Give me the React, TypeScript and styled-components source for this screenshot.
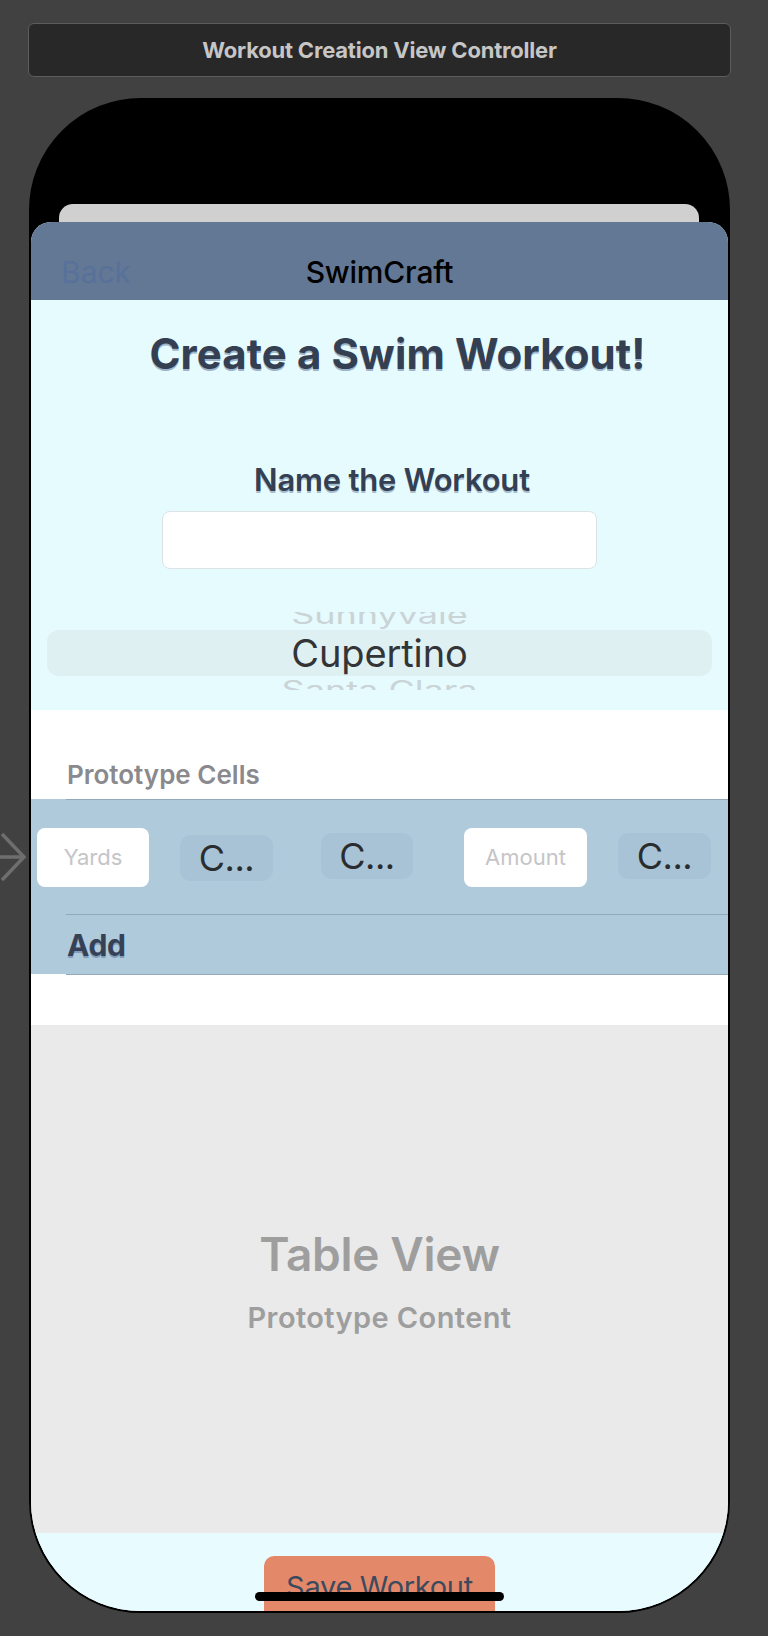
import React from "react";
import styled, { createGlobalStyle } from "styled-components";

const Global = createGlobalStyle`
  html, body { margin: 0; padding: 0; background: #414141; }
  body { font-family: Inter, "Noto Sans", Roboto, sans-serif; }
  * { box-sizing: border-box; }
`;

const Canvas = styled.div`
  position: relative;
  width: 768px;
  height: 1636px;
  overflow: hidden;
  padding-top: 23px;
  background: #414141;
`;

const TitleBar = styled.div`
  margin-left: 28px;
  width: 703px;
  height: 54px;
  display: flex;
  align-items: center;
  justify-content: center;
  background: #282828;
  border: 1.5px solid #5c5c5c;
  border-radius: 6px;
  color: #c6c6c6;
  font-weight: 700;
  font-size: 22px;
  letter-spacing: -0.2px;
`;

const EntryArrow = styled.svg`
  position: absolute;
  left: -2px;
  top: 832px;
`;

const Phone = styled.div`
  position: relative;
  margin-top: 21px;
  margin-left: 29px;
  width: 701px;
  height: 1515px;
  border: 2px solid #000;
  border-radius: 112px;
  background: #000;
  overflow: hidden;
  display: flex;
  flex-direction: column;
  padding-top: 104px;
`;

const BackCard = styled.div`
  flex-shrink: 0;
  margin: 0 29px 0 28px;
  height: 30px;
  background: #d0d0d0;
  border-radius: 14px 14px 0 0;
`;

const Sheet = styled.div`
  position: relative;
  margin-top: -12px;
  flex: 1;
  display: flex;
  flex-direction: column;
  background: #e6fbfe;
  border-radius: 20px 20px 0 0;
  overflow: hidden;
`;

const NavBar = styled.div`
  flex-shrink: 0;
  height: 78px;
  padding: 21px 30px 0;
  display: grid;
  grid-template-columns: 1fr auto 1fr;
  align-items: center;
  background: #637894;
  font-size: 30px;
  line-height: 1;
`;

const BackLabel = styled.span`
  color: #58719a;
  font-weight: 400;
`;

const NavTitle = styled.span`
  color: #000;
  font-weight: 500;
  letter-spacing: -0.2px;
`;

const Hero = styled.div`
  flex-shrink: 0;
  height: 410px;
  display: flex;
  flex-direction: column;
  align-items: center;
  background: #e6fbfe;
`;

const Heading = styled.h1`
  margin: 33px 0 0 36px;
  font-size: 42px;
  line-height: 1;
  font-weight: 700;
  letter-spacing: 0.1px;
  color: #343f52;
  text-shadow: 0 1.5px 0 rgba(85, 110, 150, 0.5);
`;

const FieldLabel = styled.div`
  margin: 89px 0 0 25px;
  font-size: 31px;
  line-height: 1;
  font-weight: 600;
  letter-spacing: -0.2px;
  color: #343f52;
  text-shadow: 0 1.5px 0 rgba(85, 110, 150, 0.45);
`;

const NameField = styled.div`
  margin-top: 16px;
  width: 435px;
  height: 58px;
  background: #fff;
  border: 1px solid #dce3e5;
  border-radius: 8px;
`;

const Picker = styled.div`
  margin-top: 43px;
  align-self: stretch;
  height: 78px;
  display: flex;
  flex-direction: column;
  overflow: hidden;
`;

const PickerGhost = styled.div<{ $pos: "top" | "bottom" }>`
  flex-shrink: 0;
  height: ${(p) => (p.$pos === "top" ? 18 : 14)}px;
  display: flex;
  justify-content: center;
  align-items: ${(p) => (p.$pos === "top" ? "flex-end" : "flex-start")};
  padding: ${(p) => (p.$pos === "top" ? "0 0 2px" : "1px 0 0")};
  span {
    display: block;
    font-size: 36px;
    line-height: 1;
    color: #cad4d7;
    transform: scaleY(0.7);
    transform-origin: ${(p) => (p.$pos === "top" ? "bottom" : "top")} center;
  }
`;

const PickerBand = styled.div`
  flex-shrink: 0;
  height: 46px;
  margin: 0 16px;
  display: flex;
  align-items: center;
  justify-content: center;
  background: #dff0f3;
  border-radius: 12px;
  font-size: 38px;
  line-height: 1;
  color: #333436;
  letter-spacing: -0.1px;
`;

const SectionHeader = styled.div`
  flex-shrink: 0;
  height: 89px;
  padding: 52px 0 0 36px;
  background: #fff;
  font-size: 26px;
  line-height: 25px;
  font-weight: 600;
  color: #8a8a8e;
  letter-spacing: 0;
`;

const Cell = styled.div<{ $h: number }>`
  flex-shrink: 0;
  position: relative;
  height: ${(p) => p.$h}px;
  display: flex;
  align-items: center;
  background-color: #aecadb;
  border-top: 1px solid transparent;
  background-image: linear-gradient(#93a9ba, #93a9ba);
  background-repeat: no-repeat;
  background-size: calc(100% - 35px) 1px;
  background-position: 35px 0;
  background-origin: border-box;
`;

const CellRow = styled.div`
  display: flex;
  align-items: center;
  padding-left: 6px;
`;

const InputBox = styled.div<{ $w: number; $ml: number }>`
  width: ${(p) => p.$w}px;
  margin-left: ${(p) => p.$ml}px;
  height: 59px;
  display: flex;
  align-items: center;
  justify-content: center;
  background: #fff;
  border-radius: 8px;
  font-size: 22px;
  color: #c5c5c8;
`;

const Chip = styled.div<{ $w: number; $ml: number; $dy: number }>`
  width: ${(p) => p.$w}px;
  margin-left: ${(p) => p.$ml}px;
  height: 46px;
  transform: translateY(${(p) => p.$dy}px);
  display: flex;
  align-items: center;
  justify-content: center;
  background: #a8c3d6;
  border-radius: 11px;
  font-size: 36px;
  line-height: 1;
  color: #2b2c2e;
  letter-spacing: -0.5px;
`;

const AddLabel = styled.span`
  padding-left: 36px;
  font-size: 30px;
  line-height: 1;
  font-weight: 700;
  color: #364156;
  letter-spacing: -0.3px;
  text-shadow: 0 1.5px 0 rgba(85, 110, 150, 0.5);
`;

const BottomRule = styled.div`
  flex-shrink: 0;
  height: 51px;
  background-color: #fff;
  background-image: linear-gradient(#93a9ba, #93a9ba);
  background-repeat: no-repeat;
  background-size: calc(100% - 35px) 1px;
  background-position: 35px 0;
`;

const TableArea = styled.div`
  flex-shrink: 0;
  height: 508px;
  padding-top: 206px;
  display: flex;
  flex-direction: column;
  align-items: center;
  background: #eaeaea;
  color: #9e9e9e;
  font-weight: 600;
  line-height: 1;
`;

const TableTitle = styled.div`
  font-size: 46px;
  letter-spacing: -0.3px;
`;

const TableSub = styled.div`
  margin-top: 26px;
  font-size: 29px;
  letter-spacing: 0.4px;
`;

const Footer = styled.div`
  flex: 1;
  display: flex;
  justify-content: center;
  padding-top: 23px;
  background: #e8fbfe;
`;

const SaveButton = styled.div`
  width: 231px;
  height: 80px;
  padding-top: 16px;
  display: flex;
  justify-content: center;
  background: #e4886a;
  border-radius: 10px;
  font-size: 29px;
  line-height: 1;
  color: #3c4a5e;
  letter-spacing: -0.3px;
`;

const HomeIndicator = styled.div`
  position: absolute;
  left: 224px;
  bottom: 10px;
  width: 249px;
  height: 9px;
  border-radius: 5px;
  background: #000;
`;

export default function App() {
  return (
    <>
      <Global />
      <Canvas>
        <TitleBar>Workout Creation View Controller</TitleBar>
        <EntryArrow width="30" height="52" viewBox="0 0 30 52">
          <path d="M0 25 H26" stroke="#6e6e6e" strokeWidth="3.5" fill="none" />
          <path d="M4 2 L26 25 L4 48" stroke="#6e6e6e" strokeWidth="3.5" fill="none" />
        </EntryArrow>
        <Phone>
          <BackCard />
          <Sheet>
            <NavBar>
              <BackLabel>Back</BackLabel>
              <NavTitle>SwimCraft</NavTitle>
              <span />
            </NavBar>
            <Hero>
              <Heading>Create a Swim Workout!</Heading>
              <FieldLabel>Name the Workout</FieldLabel>
              <NameField />
              <Picker>
                <PickerGhost $pos="top">
                  <span>Sunnyvale</span>
                </PickerGhost>
                <PickerBand>Cupertino</PickerBand>
                <PickerGhost $pos="bottom">
                  <span>Santa Clara</span>
                </PickerGhost>
              </Picker>
            </Hero>
            <SectionHeader>Prototype Cells</SectionHeader>
            <Cell $h={115}>
              <CellRow>
                <InputBox $w={112} $ml={0}>Yards</InputBox>
                <Chip $w={93} $ml={31} $dy={1}>C...</Chip>
                <Chip $w={92} $ml={48} $dy={-1}>C...</Chip>
                <InputBox $w={123} $ml={51}>Amount</InputBox>
                <Chip $w={93} $ml={31} $dy={-1}>C...</Chip>
              </CellRow>
            </Cell>
            <Cell $h={60}>
              <AddLabel>Add</AddLabel>
            </Cell>
            <BottomRule />
            <TableArea>
              <TableTitle>Table View</TableTitle>
              <TableSub>Prototype Content</TableSub>
            </TableArea>
            <Footer>
              <SaveButton>Save Workout</SaveButton>
            </Footer>
          </Sheet>
          <HomeIndicator />
        </Phone>
      </Canvas>
    </>
  );
}
